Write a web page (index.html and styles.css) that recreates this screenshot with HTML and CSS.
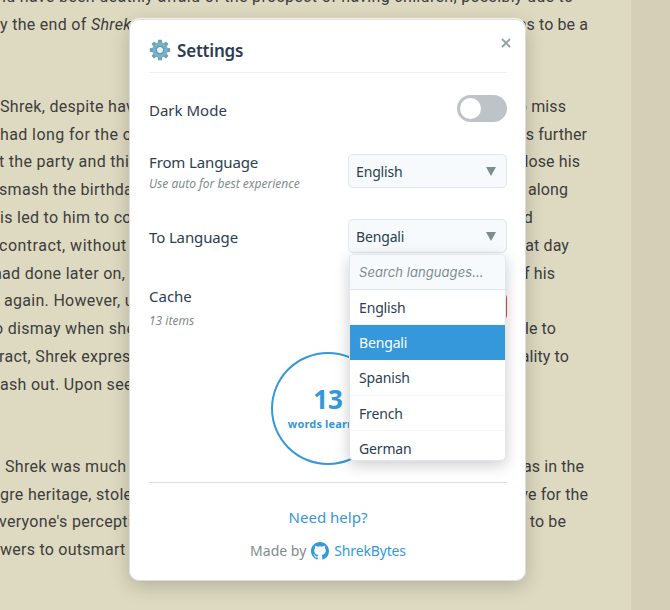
FILE: index.html
```html
<!DOCTYPE html>
<html lang="en">
<head>
<meta charset="utf-8">
<title>Settings</title>
<link rel="stylesheet" href="styles.css">
</head>
<body>
<main class="article">
  <div class="para intro">
    <div class="line wide">nd have been deathly afraid of the prospect of having children, possibly due to</div>
    <div class="line"><span>y the end of <i>Shrek</i></span><span class="e0">seems to be a</span></div>
  </div>
  <div class="para">
    <div class="line"><span>Shrek, despite having</span><span class="e23">to miss</span></div>
    <div class="line"><span class="n">had long for the old</span><span class="e1">was further</span></div>
    <div class="line"><span class="t">t the party and things</span><span class="e8">lose his</span></div>
    <div class="line"><span class="s">smash the birthday</span><span class="e20">along</span></div>
    <div class="line"><span>is led to him to confront</span><span class="e56">and</span></div>
    <div class="line"><span class="s l">contract, without</span><span class="e19">that day</span></div>
    <div class="line"><span class="h">had done later on,</span><span class="e34">of his</span></div>
    <div class="line"><span class="a">again. However, upon</span></div>
    <div class="line"><span class="o">o dismay when she</span><span class="e33">able to</span></div>
    <div class="line"><span class="s">ract, Shrek expressed</span><span class="e19">reality to</span></div>
    <div class="line"><span>ash out. Upon seeing</span></div>
  </div>
  <div class="para">
    <div class="line"><span class="w">Shrek was much</span><span class="e4">was in the</span></div>
    <div class="line"><span>gre heritage, stole</span><span class="e0">have for the</span></div>
    <div class="line"><span class="s">veryone's perception</span><span class="e23">to be</span></div>
    <div class="line"><span class="m">wers to outsmart</span></div>
  </div>
</main>
<section class="modal">
  <header class="head">
    <svg class="gear" viewBox="0 0 22 22">
      <g fill="#69a4ba"><g id="teeth"><path d="M9.2 0.8h3.6l.6 4h-4.8zM9.2 21.2h3.6l.6-4h-4.8z"/><path d="M.8 9.2v3.6l4 .6V8.600zM21.200 9.200v3.600l-4 .6V8.600z"/></g><use href="#teeth" transform="rotate(45 11 11)"/></g>
      <circle cx="11" cy="11" r="5.400" fill="none" stroke="#78b0c4" stroke-width="4.600"/>
      <circle cx="11" cy="11" r="3.600" fill="none" stroke="#5c97b0" stroke-width="1.200"/>
      <circle cx="11" cy="11" r="2.500" fill="#e5f0f4"/>
    </svg>
    <h1>Settings</h1>
    <button class="close" aria-label="Close"><svg viewBox="0 0 10 10"><path d="M1 1l8 8M9 1L1 9"/></svg></button>
  </header>
  <div class="row dark"><span class="label">Dark Mode</span><span class="toggle"></span></div>
  <div class="row from">
    <div><div class="label lang">From Language</div><div class="hint">Use auto for best experience</div></div>
    <div class="select"><span>English</span><svg viewBox="0 0 10 9"><path d="M0 0h10L5 9z"/></svg></div>
  </div>
  <div class="row to">
    <div class="label lang">To Language</div>
    <div class="select"><span>Bengali</span><svg viewBox="0 0 10 9"><path d="M0 0h10L5 9z"/></svg>
      <div class="menu">
        <div class="search">Search languages...</div>
        <div class="option">English</div>
        <div class="option active">Bengali</div>
        <div class="option">Spanish</div>
        <div class="option">French</div>
        <div class="option">German</div>
      </div>
    </div>
  </div>
  <div class="row cache">
    <div><div class="label">Cache</div><div class="hint">13 items</div></div>
    <div class="clear"></div>
  </div>
  <div class="circle"><strong>13</strong><span>words learned</span></div>
  <footer>
    <a class="help">Need help?</a>
    <div class="made"><span class="by">Made by</span><svg viewBox="0 0 16 16"><path d="M8 0C3.580 0 0 3.580 0 8c0 3.540 2.290 6.530 5.470 7.590.4.070.55-.17.55-.38 0-.19-.01-.82-.01-1.490-2.010.37-2.530-.49-2.690-.94-.09-.23-.48-.94-.82-1.130-.28-.15-.68-.52-.01-.53.63-.01 1.080.58 1.230.82.72 1.210 1.870.87 2.330.66.07-.52.28-.87.51-1.070-1.780-.2-3.640-.89-3.640-3.950 0-.87.31-1.590.82-2.150-.08-.2-.36-1.020.08-2.120 0 0 .67-.21 2.200.82a7.600 7.600 0 0 1 4 0c1.530-1.040 2.200-.82 2.200-.82.44 1.100.16 1.920.08 2.120.51.56.82 1.270.82 2.150 0 3.070-1.870 3.750-3.650 3.950.29.25.54.73.54 1.480 0 1.070-.01 1.930-.01 2.200 0 .21.15.46.55.38A8 8 0 0 0 16 8c0-4.420-3.580-8-8-8z"/></svg><a class="author">ShrekBytes</a></div>
  </footer>
</section>
</body>
</html>
```
FILE: styles.css
```css
* { box-sizing: border-box; }
body { margin: 0; width: 670px; height: 610px; overflow: hidden; position: relative; background: #d5cfb8; font-family: "Noto Sans", sans-serif; }
.article { width: 631px; height: 610px; overflow: hidden; background: #dedac1; color: #3d3d3d; font: 16px Roboto, sans-serif; letter-spacing: .1px; }
.intro { margin-top: -17px; }
.para { margin-bottom: 54.2px; }
.line { width: 589px; height: 27.8px; line-height: 27.8px; display: flex; justify-content: space-between; white-space: nowrap; }
.line span:first-child { letter-spacing: .3px; }
.line span.n { letter-spacing: .4px; }
.line span.l { letter-spacing: .5px; }
.line span.m { letter-spacing: .25px; }
.wide { margin-left: -3px; letter-spacing: .32px; }
.t { margin-left: -1px; }
.s { margin-left: -1px; }
.h { margin-left: -7px; }
.o { margin-left: -6px; }
.a { margin-left: 4px; }
.w { margin-left: 5px; }
.e0 { margin-right: 1px; }
.e1 { margin-right: 2px; }
.e4 { margin-right: 5px; }
.e8 { margin-right: 9px; }
.e19 { margin-right: 20px; }
.e20 { margin-right: 21px; }
.e23 { margin-right: 23px; }
.e33 { margin-right: 33px; }
.e34 { margin-right: 34px; }
.e56 { margin-right: 56px; }

.modal { position: absolute; left: 129px; top: 19px; width: 397px; height: 562px; padding: 0 18px 0 19px; border: 1px solid #ddd; border-radius: 10px; background: #fff; box-shadow: 0 -1px 0 #f5f3ea, 0 5px 20px rgba(0,0,0,.2); color: #2c3e50; }
.head { height: 53px; border-bottom: 1px solid #eee; display: flex; align-items: center; padding-top: 9px; position: relative; }
.gear { width: 22px; height: 22px; margin-top: -2px; }
h1 { margin: 0 0 0 6px; font-size: 17px; font-weight: 600; line-height: 24px; letter-spacing: -.2px; }
.close { position: absolute; right: -4px; top: 18px; width: 10px; height: 10px; padding: 0; border: 0; background: none; }
.close svg { display: block; width: 10px; height: 10px; fill: none; stroke: #95a5a6; stroke-width: 2; }
.row { display: flex; justify-content: space-between; }
.label { font-size: 15px; line-height: 20px; }
.lang { letter-spacing: -.13px; }
.hint { font-size: 12px; line-height: 17px; font-style: italic; color: #7f8c8d; margin-top: 3px; }
.dark { height: 81px; padding-top: 22px; }
.dark .label { padding-top: 5px; }
.toggle { width: 50px; height: 27px; border-radius: 14px; background: #bdc3c7; padding: 3px; }
.toggle::before { content: ""; display: block; width: 21px; height: 21px; border-radius: 50%; background: #fff; }
.select { position: relative; width: 159px; height: 34px; padding: 0 10px 0 7px; border: 1px solid #dfe6ee; border-radius: 5px; background: #f7fafd; font-size: 14px; letter-spacing: -.15px; display: flex; align-items: center; justify-content: space-between; }
.select > svg { width: 10px; height: 9px; fill: #7f8c8d; }
.from { height: 65px; }
.from .label { margin-top: -2px; }
.to { height: 68px; }
.to .label { padding-top: 8px; }
.menu { position: absolute; z-index: 2; left: 0; top: 34px; width: 157px; height: 207px; overflow: hidden; border: 1px solid #dfe6ee; border-radius: 5px; background: #fff; box-shadow: 0 4px 15px rgba(0,0,0,.2); }
.search { height: 35px; padding-left: 9px; border-bottom: 1px solid #dfe6ee; background: #f7fafd; color: #7f8c8d; font: italic 13px/35px Inter, sans-serif; letter-spacing: .07px; }
.option { height: 35.2px; padding-left: 9px; line-height: 36px; border-bottom: 1px solid #f4f6f8; }
.active { background: #3498db; border-color: #3498db; color: #fff; }
.cache { height: 65px; }
.cache .label { margin-top: -1px; }
.cache .hint { margin-top: 6px; }
.clear { width: 90px; height: 25px; margin-top: 7px; border-radius: 4px; background: #e74c3c; }
.circle { width: 114px; height: 113px; margin: 0 auto; border: 2px solid #3498db; border-radius: 50%; color: #3498db; text-align: center; display: flex; flex-direction: column; align-items: center; padding-top: 28px; }
.circle strong { font-size: 26px; line-height: 34px; }
.circle span { font-size: 11px; line-height: 15px; font-weight: 700; letter-spacing: .15px; }
footer { margin-top: 17px; border-top: 1px solid #ddd; padding-top: 23px; text-align: center; font-size: 14px; line-height: 20px; color: #7f8c8d; }
footer a { color: #3498db; }
.help { display: block; font-size: 15px; line-height: 22px; }
.made { display: flex; justify-content: center; align-items: center; margin-top: 13px; }
.made svg { width: 18px; height: 18px; margin: 0 5px; fill: #3498db; }
.author { letter-spacing: -.15px; }
```
